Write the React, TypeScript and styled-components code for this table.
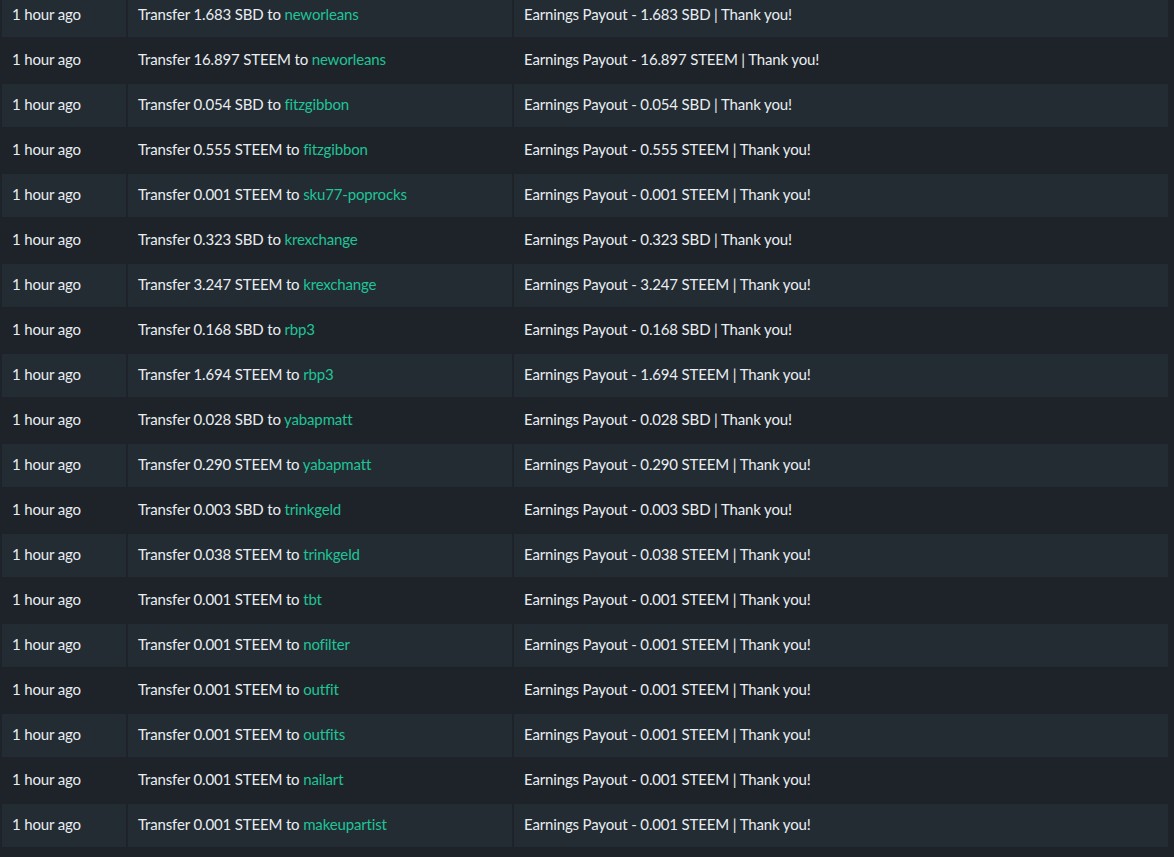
import React from "react";
import styled, { createGlobalStyle } from "styled-components";

const GlobalStyle = createGlobalStyle`
  html, body {
    margin: 0;
    padding: 0;
    background: #1e2329;
    overflow: hidden;
  }
  body {
    font-family: Lato, "Open Sans", "Noto Sans", sans-serif;
    color: #e9eef2;
  }
`;

const Page = styled.div`
  width: 1174px;
  height: 857px;
  overflow: hidden;
  background: #1e2329;
`;

const Table = styled.table`
  width: 1170px;
  margin-top: -8px;
  border-collapse: separate;
  border-spacing: 2px;
  table-layout: fixed;
`;

const Row = styled.tr<{ $striped: boolean }>`
  & > td {
    background: ${(p) => (p.$striped ? "#232b33" : "transparent")};
  }
`;

const Cell = styled.td<{ $w?: number }>`
  width: ${(p) => (p.$w ? `${p.$w}px` : "auto")};
  height: 43px;
  padding: 0 10px 4px 10px;
  box-sizing: border-box;
  font-size: 15px;
  letter-spacing: -0.15px;
  line-height: 20px;
  white-space: nowrap;
  vertical-align: middle;
`;

const Account = styled.a`
  color: #20c497;
  text-decoration: none;
`;

type Tx = { amount: string; to: string };

const rows: Tx[] = [
  { amount: "1.683 SBD", to: "neworleans" },
  { amount: "16.897 STEEM", to: "neworleans" },
  { amount: "0.054 SBD", to: "fitzgibbon" },
  { amount: "0.555 STEEM", to: "fitzgibbon" },
  { amount: "0.001 STEEM", to: "sku77-poprocks" },
  { amount: "0.323 SBD", to: "krexchange" },
  { amount: "3.247 STEEM", to: "krexchange" },
  { amount: "0.168 SBD", to: "rbp3" },
  { amount: "1.694 STEEM", to: "rbp3" },
  { amount: "0.028 SBD", to: "yabapmatt" },
  { amount: "0.290 STEEM", to: "yabapmatt" },
  { amount: "0.003 SBD", to: "trinkgeld" },
  { amount: "0.038 STEEM", to: "trinkgeld" },
  { amount: "0.001 STEEM", to: "tbt" },
  { amount: "0.001 STEEM", to: "nofilter" },
  { amount: "0.001 STEEM", to: "outfit" },
  { amount: "0.001 STEEM", to: "outfits" },
  { amount: "0.001 STEEM", to: "nailart" },
  { amount: "0.001 STEEM", to: "makeupartist" },
];

export default function App() {
  return (
    <Page>
      <GlobalStyle />
      <Table>
        <tbody>
          {rows.map((r, i) => (
            <Row key={i} $striped={i % 2 === 0}>
              <Cell $w={124}>1 hour ago</Cell>
              <Cell $w={384}>
                Transfer {r.amount} to <Account href="#">{r.to}</Account>
              </Cell>
              <Cell>Earnings Payout - {r.amount} | Thank you!</Cell>
            </Row>
          ))}
        </tbody>
      </Table>
    </Page>
  );
}
